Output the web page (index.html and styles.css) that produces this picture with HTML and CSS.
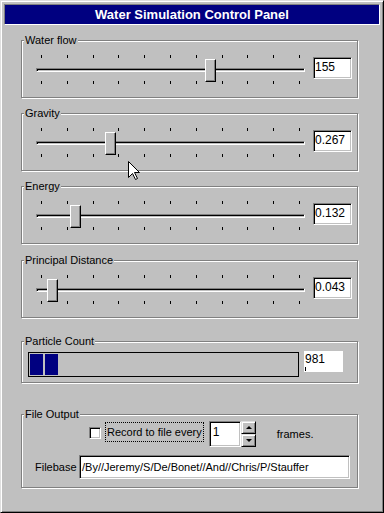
FILE: index.html
```html
<!DOCTYPE html>
<html lang="en">
<head>
  <meta charset="UTF-8">
  <title>Water Simulation Control Panel</title>
  <link rel="stylesheet" href="styles.css">
</head>
<body>

  <div class="window">
    <div class="title-bar">Water Simulation Control Panel</div>

    <!-- Sliders -->
    <div class="group">
      <span class="group-label">Water flow</span>
      <div class="slider-row">
        <div class="slider">
          <div class="ticks"><i></i><i></i><i></i><i></i><i></i><i></i><i></i><i></i><i></i><i></i><i></i></div>
          <div class="track"></div>
          <div class="ticks ticks-bottom"><i></i><i></i><i></i><i></i><i></i><i></i><i></i><i></i><i></i><i></i><i></i></div>
          <div class="thumb" style="left: 170px"></div>
        </div>
        <div class="textbox value-box">155</div>
      </div>
    </div>

    <div class="group">
      <span class="group-label">Gravity</span>
      <div class="slider-row">
        <div class="slider">
          <div class="ticks"><i></i><i></i><i></i><i></i><i></i><i></i><i></i><i></i><i></i><i></i><i></i></div>
          <div class="track"></div>
          <div class="ticks ticks-bottom"><i></i><i></i><i></i><i></i><i></i><i></i><i></i><i></i><i></i><i></i><i></i></div>
          <div class="thumb" style="left: 70px"></div>
        </div>
        <div class="textbox value-box">0.267</div>
      </div>
    </div>

    <div class="group">
      <span class="group-label">Energy</span>
      <div class="slider-row">
        <div class="slider">
          <div class="ticks"><i></i><i></i><i></i><i></i><i></i><i></i><i></i><i></i><i></i><i></i><i></i></div>
          <div class="track"></div>
          <div class="ticks ticks-bottom"><i></i><i></i><i></i><i></i><i></i><i></i><i></i><i></i><i></i><i></i><i></i></div>
          <div class="thumb" style="left: 35px"></div>
        </div>
        <div class="textbox value-box">0.132</div>
      </div>
    </div>

    <div class="group group-principal">
      <span class="group-label">Principal Distance</span>
      <div class="slider-row">
        <div class="slider">
          <div class="ticks"><i></i><i></i><i></i><i></i><i></i><i></i><i></i><i></i><i></i><i></i><i></i></div>
          <div class="track"></div>
          <div class="ticks ticks-bottom"><i></i><i></i><i></i><i></i><i></i><i></i><i></i><i></i><i></i><i></i><i></i></div>
          <div class="thumb" style="left: 12px"></div>
        </div>
        <div class="textbox value-box">0.043</div>
      </div>
    </div>

    <!-- Particle count -->
    <div class="group group-particles">
      <span class="group-label">Particle Count</span>
      <div class="progress-row">
        <div class="progress">
          <span class="block"></span>
          <span class="block"></span>
        </div>
        <div class="count-box">981</div>
      </div>
    </div>

    <!-- File output -->
    <div class="group group-file">
      <span class="group-label">File Output</span>
      <div class="record-row">
        <span class="checkbox"></span>
        <span class="record-label">Record to file every</span>
        <div class="spin">
          <div class="textbox spin-box">1</div>
          <div class="spin-buttons">
            <span class="spin-btn spin-up"></span>
            <span class="spin-btn spin-down"></span>
          </div>
        </div>
        <span class="frames">frames.</span>
      </div>
      <div class="filebase-row">
        <span class="filebase-label">Filebase</span>
        <div class="textbox filebase-box">/By//Jeremy/S/De/Bonet//And//Chris/P/Stauffer</div>
      </div>
    </div>

    <!-- Mouse pointer -->
    <svg class="cursor" width="13" height="20" viewBox="0 0 13 20">
      <path d="M0.5 0.5 L0.5 16.5 L4.5 12.5 L7.5 18.5 L9.5 17.5 L6.5 11.5 L11.5 11.5 Z" fill="#fff" stroke="#000" stroke-width="1"/>
    </svg>
  </div>

</body>
</html>
```

FILE: styles.css
```css
/* Window frame */
body {
  margin: 0;
  background: #c0c0c0;
  font-family: "Liberation Sans", Arial, sans-serif;
  font-size: 11px;
  color: #000;
}

.window {
  position: relative;
  width: 384px;
  height: 513px;
  box-sizing: border-box;
  padding: 2px 3px;
  background: #c0c0c0;
  border: 1px solid;
  border-color: #dfdfdf #000 #000 #dfdfdf;
  box-shadow: inset 1px 1px 0 #fff, inset -1px -1px 0 #808080;
}

.title-bar {
  height: 21px;
  box-sizing: border-box;
  margin-top: 1px;
  background: #000080;
  border: 1px solid;
  border-color: #808080 #fff #fff #808080;
  color: #fff;
  font-weight: bold;
  font-size: 13px;
  line-height: 19px;
  text-align: center;
}

/* Group boxes */
.group {
  position: relative;
  width: 337px;
  height: 58px;
  box-sizing: border-box;
  margin: 15px 0 0 17px;
  border: 1px solid #808080;
  box-shadow: inset 1px 1px 0 #fff, 1px 1px 0 #fff;
}

.group-principal {
  margin-top: 16px;
}

.group-label {
  position: absolute;
  top: -7px;
  left: 2px;
  padding: 0 1px;
  background: #c0c0c0;
  line-height: 13px;
  white-space: nowrap;
}

/* Slider */
.slider-row {
  display: flex;
  align-items: flex-start;
  padding: 13px 0 0 13px;
}

.slider {
  position: relative;
  width: 270px;
  height: 31px;
}

.ticks {
  display: flex;
  justify-content: space-between;
  height: 3px;
  margin: 1px 5px 0 6px;
}

.ticks i {
  width: 1px;
  height: 3px;
  background: #000;
}

.ticks-bottom {
  margin-top: 9px;
}

.track {
  width: 269px;
  height: 4px;
  box-sizing: border-box;
  margin: 10px 0 0 1px;
  border: 1px solid;
  border-color: #808080 #fff #fff #808080;
  box-shadow: inset 1px 1px 0 #000;
}

.thumb {
  position: absolute;
  top: 5px;
  width: 11px;
  height: 23px;
  box-sizing: border-box;
  background: #c0c0c0;
  border: 1px solid;
  border-color: #fff #000 #000 #fff;
  box-shadow: inset -1px -1px 0 #808080;
}

/* Text boxes */
.textbox {
  box-sizing: border-box;
  background: #fff;
  border: 1px solid;
  border-color: #808080 #fff #fff #808080;
  box-shadow: inset 1px 1px 0 #000, inset -1px -1px 0 #c0c0c0;
  white-space: nowrap;
  overflow: hidden;
}

.value-box {
  width: 39px;
  height: 22px;
  margin: 3px 0 0 8px;
  padding: 2px 0 0 1px;
  font-size: 12px;
  line-height: 14px;
}

/* Progress */
.progress-row {
  display: flex;
  align-items: flex-start;
  padding: 9px 0 0 6px;
}

.progress {
  display: flex;
  gap: 2px;
  width: 271px;
  height: 25px;
  box-sizing: border-box;
  margin-top: 1px;
  padding: 1px;
  border: 1px solid #000;
}

.block {
  width: 13px;
  height: 21px;
  background: #000080;
}

.count-box {
  position: relative;
  width: 40px;
  height: 22px;
  box-sizing: border-box;
  margin-left: 5px;
  padding: 1px 0 0 1px;
  background: #fff;
  box-shadow: inset -1px -1px 0 #c0c0c0;
  font-size: 12px;
  line-height: 14px;
}

.count-box::after {
  content: "";
  position: absolute;
  left: 1px;
  bottom: 2px;
  width: 1px;
  height: 4px;
  background: #000;
}

.group-particles {
  height: 42px;
  margin-top: 23px;
}

/* File output */
.group-file {
  height: 74px;
  margin-top: 31px;
}

.record-row {
  display: flex;
  align-items: flex-start;
  padding: 6px 0 0 67px;
}

.checkbox {
  width: 12px;
  height: 12px;
  box-sizing: border-box;
  margin-top: 6px;
  background: #fff;
  border: 1px solid;
  border-color: #808080 #fff #fff #808080;
  box-shadow: inset 1px 1px 0 #000, inset -1px -1px 0 #c0c0c0;
}

.record-label {
  height: 20px;
  box-sizing: border-box;
  margin: 1px 0 0 4px;
  padding: 0 1px;
  border: 1px dotted #000;
  line-height: 18px;
  white-space: nowrap;
}

.spin {
  display: flex;
  margin-left: 5px;
}

.spin-box {
  width: 32px;
  height: 26px;
  padding: 3px 0 0 3px;
  font-size: 12px;
  line-height: 14px;
}

.spin-buttons {
  display: flex;
  flex-direction: column;
}

.spin-btn {
  position: relative;
  width: 15px;
  height: 13px;
  box-sizing: border-box;
  background: #c0c0c0;
  border: 1px solid;
  border-color: #dfdfdf #000 #000 #dfdfdf;
  box-shadow: inset 1px 1px 0 #fff, inset -1px -1px 0 #808080;
}

.spin-btn::after {
  content: "";
  position: absolute;
  left: 4px;
  width: 0;
  height: 0;
  border-left: 3px solid transparent;
  border-right: 3px solid transparent;
}

.spin-up::after {
  top: 4px;
  border-bottom: 3px solid #000;
}

.spin-down::after {
  top: 4px;
  border-top: 3px solid #000;
}

.frames {
  margin: 6px 0 0 21px;
  line-height: 14px;
}

.filebase-row {
  display: flex;
  align-items: center;
  margin-top: 8px;
  padding-left: 13px;
}

.filebase-label {
  width: 44px;
}

.filebase-box {
  width: 271px;
  height: 24px;
  padding: 0 0 0 2px;
  font-size: 11px;
  line-height: 22px;
}

.cursor {
  position: absolute;
  left: 127px;
  top: 160px;
}
```
